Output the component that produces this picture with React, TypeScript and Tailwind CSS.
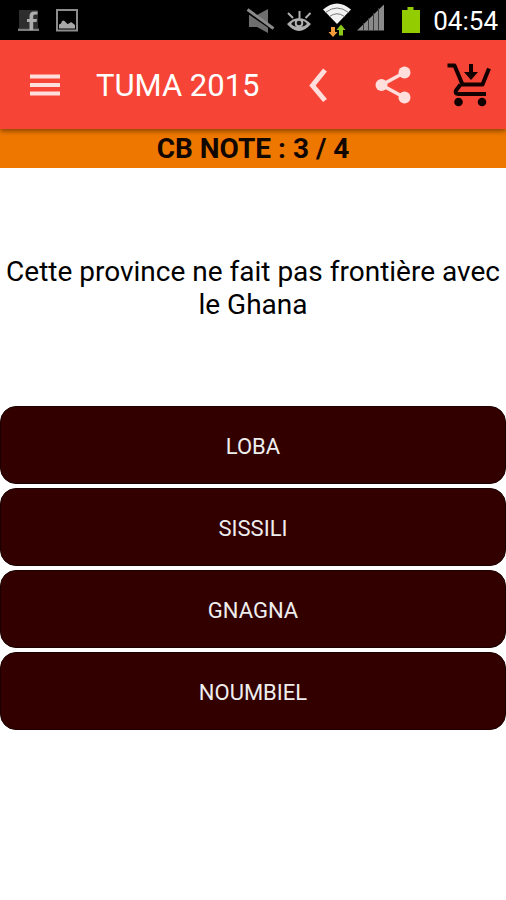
const answers = ["LOBA", "SISSILI", "GNAGNA", "NOUMBIEL"];

const StatusBar = () => {
  return (
    <div className="flex h-10 items-center justify-between bg-black pl-4 pr-2 text-white">
      <div className="flex items-center gap-4">
        <svg className="h-6 w-6" viewBox="0 0 24 24">
          <path d="M3 2h19v18H3z" fill="#2e2e2e" />
          <path d="M2 20.500h21v2.500H2z" fill="#7c7c7c" />
          <path d="M13.500 22v-8H11v-3h2.500V8.500q0-5 4.500-5h3.500v3H19q-1.800 0-1.800 1.800V11H21l-.5 3h-3.300v8z" fill="#adadad" />
        </svg>
        <svg className="h-6 w-6" viewBox="0 0 24 24">
          <path d="M1 2h20v20.500H1z" fill="none" stroke="#8c8c8c" strokeWidth="2" />
          <path d="M3 20.500v-4l2-1q1-4 3.500-2.500l3 3 2-.8q1.500-2 3.500.3l2 1.500v3.500z" fill="#a8a8a8" />
        </svg>
      </div>
      <div className="flex items-center">
        <svg className="h-10 w-36" viewBox="0 0 144 40">
          {/* muted speaker */}
          <path d="M4 15h8l11-6v24l-11-6H4z" fill="#6e6e6e" />
          <path d="M2 12l26 18" stroke="#000000" strokeWidth="2" />
          <path d="M2.500 9.500l26 19" stroke="#8a8a8a" strokeWidth="3" />
          {/* eye */}
          <path d="M42 24q12-12 24 0-12 14-24 0z" fill="#b0b0b0" />
          <path d="M46 24q2-3 4-3-1 5 2 6-3 0-6-3zM62 24q-2-3-4-3 1 5-2 6 3 0 6-3z" fill="#111111" />
          <circle cx="54" cy="23" r="2.300" fill="#111111" />
          <path d="M43 13l5 5M54.500 11v7M65.500 13l-5 5" stroke="#b0b0b0" strokeWidth="2" />
          {/* wifi */}
          <path d="M78 9.500q14-12 28 0L92 24z" fill="#f2f2f2" />
          <path d="M80.500 12.500q11.500-9 23 0M84.500 16.500q7.500-5.500 15 0" fill="none" stroke="#777777" strokeWidth="1" />
          <path d="M86 27h4v5h2.500L88 37l-4.500-5H86z" fill="#f59b3c" />
          <path d="M94 35.500h4V30h2.500L96 24.500 91.500 30H94z" fill="#8cc71c" />
          {/* signal */}
          <path d="M112 30.500l27-26v26z" fill="#8a8a8a" />
          <path d="M118.500 23v8M123.500 18v13M128.500 13v18M133.500 8v23" stroke="#3a3a3a" strokeWidth="1" />
        </svg>
        <svg className="ml-3 h-7 w-5" viewBox="0 0 20 28">
          <path d="M1 4h5.500V1h6v3H19v23H1z" fill="#93cc00" />
        </svg>
        <span className="ml-3 pt-0.5 text-[26px] leading-9">04:54</span>
      </div>
    </div>
  );
};

const Toolbar = () => {
  return (
    <header className="relative flex h-[89px] items-center bg-[#f64537] pl-5 pr-3 text-white shadow-[0_2px_5px_rgba(0,0,0,0.45)]">
      <button type="button" aria-label="Menu" className="flex h-12 w-12 items-center justify-center">
        <svg className="h-12 w-12" viewBox="0 0 48 48">
          <path d="M10 15.500h30M10 24h30M10 32.500h30" stroke="#ffdedb" strokeWidth="4" />
        </svg>
      </button>
      <h1 className="ml-7 flex-1 pt-0.5 text-[31px] leading-10">TUMA 2015</h1>
      <div className="flex items-center gap-7">
        <button type="button" aria-label="Retour">
          <svg className="h-12 w-12" viewBox="0 0 48 48">
            <path d="M31 9L18.500 24.500 31 39.500" fill="none" stroke="#ffdedb" strokeWidth="5" />
          </svg>
        </button>
        <button type="button" aria-label="Partager">
          <svg className="h-12 w-12" viewBox="0 0 48 48">
            <path d="M34.500 11.500L11.500 24l23 12.500" fill="none" stroke="#ffdedb" strokeWidth="3.500" />
            <g fill="#ffdedb">
              <circle cx="11.500" cy="24" r="6" />
              <circle cx="34.500" cy="11.500" r="6" />
              <circle cx="34.500" cy="36.500" r="6" />
            </g>
          </svg>
        </button>
        <button type="button" aria-label="Acheter">
          <svg className="h-12 w-12" viewBox="0 0 48 48">
            <g fill="none" stroke="#120000" strokeWidth="4">
              <path d="M1.500 4.500h7L16.500 23.500h20L43 7.500" strokeLinejoin="round" />
              <path d="M14.500 23.500l-4.500 6q-1.500 3.500 2.500 3.500H40" />
            </g>
            <path d="M23 3h4v8h5l-7 8-7-8h5z" fill="#120000" />
            <circle cx="12.500" cy="41" r="4.300" fill="#120000" />
            <circle cx="36" cy="41" r="4.300" fill="#120000" />
          </svg>
        </button>
      </div>
    </header>
  );
};

const App = () => {
  return (
    <div className="min-h-screen bg-white font-[Roboto,sans-serif]">
      <StatusBar />
      <Toolbar />
      <main>
        <div className="bg-[#ee7700] pt-px text-center text-[28px] font-bold leading-[38px] text-[#120600]">
          CB NOTE : 3 / 4
        </div>
        <p className="flex h-[238px] items-center justify-center pt-0.5 text-center text-[28px] leading-[33px] text-black">
          Cette province ne fait pas frontière avec le Ghana
        </p>
        <div className="flex flex-col gap-1">
          {answers.map((answer) => (
            <button
              key={answer}
              type="button"
              className="h-[78px] w-full rounded-2xl border border-[#1c0000] bg-[#330000] pt-0.5 text-[22px] text-[#eeeeee]"
            >
              {answer}
            </button>
          ))}
        </div>
      </main>
    </div>
  );
};

export default App;
